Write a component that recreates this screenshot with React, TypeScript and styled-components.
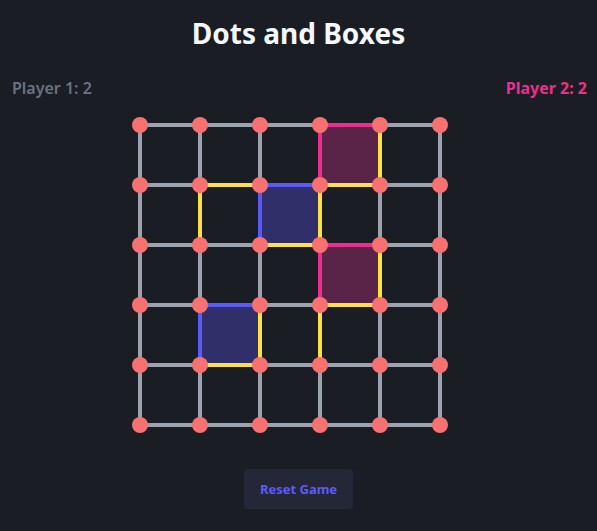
import React from "react";
import styled, { createGlobalStyle } from "styled-components";

const GlobalStyle = createGlobalStyle`
  html, body { margin: 0; padding: 0; background: #1a1e24; }
  body { font-family: "Noto Sans", "Open Sans", sans-serif; }
`;

const Page = styled.div`
  width: 597px;
  height: 531px;
  background: #1a1e24;
  display: flex;
  flex-direction: column;
  align-items: center;
  box-sizing: border-box;
  padding-top: 14px;
`;

const Title = styled.h1`
  margin: 0;
  font-size: 28px;
  font-weight: 700;
  color: #f3f9ff;
  line-height: 38px;
`;

const ScoreRow = styled.div`
  width: 100%;
  box-sizing: border-box;
  padding: 0 10px 0 12px;
  margin-top: 24px;
  display: flex;
  justify-content: space-between;
`;

const Score = styled.span<{ $color: string; $active?: boolean }>`
  font-size: 16px;
  font-weight: ${(p) => (p.$active ? 700 : 600)};
  color: ${(p) => p.$color};
  line-height: 24px;
`;

const Board = styled.svg`
  display: block;
  margin-top: 15px;
`;

const ResetButton = styled.button`
  margin-top: 34px;
  width: 109px;
  height: 40px;
  border: none;
  border-radius: 4px;
  background: #232738;
  color: #5b5cf6;
  font-family: "Noto Sans", "Open Sans", sans-serif;
  font-size: 13px;
  font-weight: 700;
  cursor: pointer;
`;

const GRAY = "#9ca3af";
const Y = "#fde047";
const P = "#ec2f8e";
const B = "#5a5af6";

const H: string[][] = [
  [GRAY, GRAY, GRAY, P, GRAY],
  [GRAY, Y, B, Y, GRAY],
  [GRAY, GRAY, Y, P, GRAY],
  [GRAY, B, GRAY, Y, GRAY],
  [GRAY, Y, GRAY, GRAY, GRAY],
  [GRAY, GRAY, GRAY, GRAY, GRAY],
];

// V[col][row]
const V: string[][] = [
  [GRAY, GRAY, GRAY, GRAY, GRAY],
  [GRAY, Y, GRAY, B, GRAY],
  [GRAY, B, GRAY, Y, GRAY],
  [P, Y, P, Y, GRAY],
  [Y, GRAY, Y, GRAY, GRAY],
  [GRAY, GRAY, GRAY, GRAY, GRAY],
];

const boxes = [
  { r: 0, c: 3, fill: "#5a2448" },
  { r: 1, c: 2, fill: "#312f69" },
  { r: 2, c: 3, fill: "#5a2448" },
  { r: 3, c: 1, fill: "#312f69" },
];

const S = 60;
const O = 10;

export default function App() {
  return (
    <>
      <GlobalStyle />
      <Page>
        <Title>Dots and Boxes</Title>
        <ScoreRow>
          <Score $color="#6b7280">Player 1: 2</Score>
          <Score $color="#ec2f8e" $active>Player 2: 2</Score>
        </ScoreRow>
        <Board width={337} height={320} viewBox="0 0 337 320">
          {boxes.map((b, i) => (
            <rect key={i} x={O + b.c * S} y={O + b.r * S} width={S} height={S} fill={b.fill} />
          ))}
          {H.map((row, r) =>
            row.map((col, c) => (
              <line key={`h${r}${c}`} x1={O + c * S} y1={O + r * S} x2={O + (c + 1) * S} y2={O + r * S} stroke={col} strokeWidth={4} />
            ))
          )}
          {V.map((colArr, c) =>
            colArr.map((col, r) => (
              <line key={`v${c}${r}`} x1={O + c * S} y1={O + r * S} x2={O + c * S} y2={O + (r + 1) * S} stroke={col} strokeWidth={4} />
            ))
          )}
          {Array.from({ length: 6 }).map((_, r) =>
            Array.from({ length: 6 }).map((__, c) => (
              <circle key={`d${r}${c}`} cx={O + c * S} cy={O + r * S} r={8} fill="#f87171" />
            ))
          )}
        </Board>
        <ResetButton>Reset Game</ResetButton>
      </Page>
    </>
  );
}
